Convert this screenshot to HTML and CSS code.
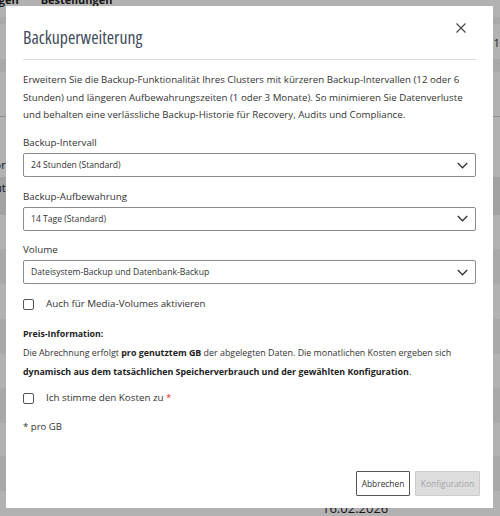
FILE: index.html
```
<!DOCTYPE html>
<html lang="de">
<head>
<meta charset="utf-8">
<title>Backuperweiterung</title>
<link rel="stylesheet" href="styles.css">
</head>
<body>

<!-- page behind the dialog -->
<div class="page">
  <div class="tabs"><span class="tab tab-cut">Anfragen</span><span class="tab">Bestellungen</span></div>
  <div class="band band-dark h7"></div>
  <div class="band h35"><span class="cell-right">13</span></div>
  <div class="band band-dark h13"></div>
  <div class="band h44 line-bottom"></div>
  <div class="band h60"><span class="cell-left">Vor</span></div>
  <div class="band band-darker h38"><span class="cell-left">Aut</span></div>
  <div class="band h34"></div>
  <div class="band band-dark h35"></div>
  <div class="band h35"></div>
  <div class="band band-dark h35"></div>
  <div class="band h34"></div>
  <div class="band band-dark h35"></div>
  <div class="band h33"></div>
  <div class="band band-dark h35"></div>
  <div class="band h30"><span class="date">16.02.2026</span></div>
</div>

<div class="overlay">
  <div class="modal">
    <div class="modal-head">
      <h2 class="modal-title">Backuperweiterung</h2>
      <button class="close" type="button" aria-label="Schließen">
        <svg width="10" height="10" viewBox="0 0 10 10"><path d="M0.5 0.5L9.5 9.5M9.5 0.5L0.5 9.5" stroke="#444" stroke-width="1.1" fill="none"/></svg>
      </button>
    </div>
    <hr class="rule">

    <p class="intro">Erweitern Sie die Backup-Funktionalität Ihres Clusters mit kürzeren Backup-Intervallen (12 oder 6 Stunden) und längeren Aufbewahrungszeiten (1 oder 3 Monate). So minimieren Sie Datenverluste und behalten eine verlässliche Backup-Historie für Recovery, Audits und Compliance.</p>

    <div class="field">
      <label class="field-label">Backup-Intervall</label>
      <div class="select"><span>24 Stunden (Standard)</span>
        <svg width="11" height="7" viewBox="0 0 11 7"><path d="M0.8 1L5.5 5.8L10.2 1" stroke="#333" stroke-width="1.3" fill="none"/></svg></div>
    </div>

    <div class="field">
      <label class="field-label">Backup-Aufbewahrung</label>
      <div class="select"><span>14 Tage (Standard)</span>
        <svg width="11" height="7" viewBox="0 0 11 7"><path d="M0.8 1L5.5 5.8L10.2 1" stroke="#333" stroke-width="1.3" fill="none"/></svg></div>
    </div>

    <div class="field">
      <label class="field-label">Volume</label>
      <div class="select"><span>Dateisystem-Backup und Datenbank-Backup</span>
        <svg width="11" height="7" viewBox="0 0 11 7"><path d="M0.8 1L5.5 5.8L10.2 1" stroke="#333" stroke-width="1.3" fill="none"/></svg></div>
    </div>

    <label class="check"><span class="box"></span>Auch für Media-Volumes aktivieren</label>

    <div class="price">
      <div class="price-title">Preis-Information:</div>
      <p class="price-text">Die Abrechnung erfolgt <b>pro genutztem GB</b> der abgelegten Daten. Die monatlichen Kosten ergeben sich <b>dynamisch aus dem tatsächlichen Speicherverbrauch und der gewählten Konfiguration</b>.</p>
    </div>

    <label class="check check-terms"><span class="box"></span>Ich stimme den Kosten zu&nbsp;<span class="req">*</span></label>

    <div class="note">* pro GB</div>

    <div class="modal-foot">
      <button class="btn btn-cancel" type="button">Abbrechen</button>
      <button class="btn btn-disabled" type="button" disabled>Konfiguration</button>
    </div>
  </div>
</div>

</body>
</html>
```

FILE: styles.css
```
html, body { margin: 0; padding: 0; }
body {
  width: 500px;
  height: 516px;
  overflow: hidden;
  font-family: "Open Sans", "DejaVu Sans", sans-serif;
  color: #333;
  background: #fff;
}

/* background page */
.page { width: 500px; }
.tabs {
  height: 17px;
  display: flex;
  gap: 22px;
  font-size: 11px;
  font-weight: bold;
  color: #222;
  line-height: 0;
  overflow: hidden;
}
.tab-cut { margin-left: -32px; }
.band { position: relative; background: #fff; }
.band-dark { background: #f2f2f2; }
.band-darker { background: #e8e8e8; }
.line-bottom { border-bottom: 1px solid #ccc; }
.h7 { height: 7px; }
.h13 { height: 13px; }
.h30 { height: 30px; }
.h33 { height: 33px; }
.h34 { height: 34px; }
.h35 { height: 35px; }
.h38 { height: 38px; }
.h44 { height: 44px; }
.h60 { height: 60px; }
.cell-right { position: absolute; right: -6px; top: 11px; font-size: 11px; color: #222; }
.cell-left { position: absolute; left: -12px; font-size: 11px; color: #222; }
.h60 .cell-left { top: 40px; }
.h38 .cell-left { top: 3px; }
.date { position: absolute; left: 322px; top: 8px; font-size: 13px; color: #222; }

/* dialog */
.overlay {
  position: fixed;
  inset: 0;
  background: rgba(0, 0, 0, 0.3);
  padding: 6px 7px 8px 6px;
  display: flex;
}
.modal {
  flex: 1;
  background: #fff;
  display: flex;
  flex-direction: column;
  padding: 18.5px 17px 12px 17px;
}
.modal-head {
  display: flex;
  justify-content: space-between;
  align-items: flex-start;
}
.modal-title {
  margin: 0;
  font-size: 17.8px;
  font-stretch: condensed;
  line-height: 24px;
  font-weight: normal;
  color: #3f4b5b;
}
.close {
  border: none;
  background: none;
  padding: 0;
  margin: -1.5px 10px 0 0;
  width: 10px;
  height: 10px;
  display: flex;
}
.rule {
  border: none;
  height: 1px;
  background: #dcdcdc;
  margin: 10.5px 0 0 0;
}
.intro {
  margin: 11px 0 0 0;
  font-size: 9.7px;
  line-height: 17.5px;
  color: #333;
}
.field { margin-top: 10.5px; }
.field-label {
  display: block;
  font-size: 9.8px;
  line-height: 18px;
  color: #333;
  margin-bottom: 1px;
}
.select {
  height: 24px;
  box-sizing: border-box;
  border: 1px solid #8c8c8c;
  border-radius: 2px;
  display: flex;
  align-items: center;
  justify-content: space-between;
  padding: 0 7px 0 7px;
  font-size: 8.6px;
  color: #333;
}
.check {
  display: flex;
  align-items: center;
  margin-top: 11px;
  font-size: 9.8px;
  line-height: 18px;
  color: #333;
}
.box {
  width: 9px;
  height: 9px;
  border: 1px solid #555;
  border-radius: 2px;
  flex: none;
  margin-right: 12px;
}
.price { margin-top: 12px; }
.price-title {
  font-size: 8.8px;
  font-weight: bold;
  line-height: 18px;
  color: #222;
}
.price-text {
  margin: 0;
  font-size: 8.9px;
  line-height: 19px;
  color: #333;
}
.price-text b { color: #222; }
.check-terms { margin-top: 8px; }
.req { color: #d33; }
.note {
  margin-top: 11px;
  font-size: 9.6px;
  line-height: 18px;
}
.modal-foot {
  margin-top: auto;
  margin-right: -4px;
  display: flex;
  justify-content: flex-end;
  gap: 5px;
}
.btn {
  height: 25px;
  box-sizing: border-box;
  border: 1px solid #555;
  border-radius: 1px;
  background: #fff;
  font-family: "Open Sans", "DejaVu Sans", sans-serif;
  font-size: 8.4px;
  color: #333;
  padding: 0;
}
.btn-cancel { width: 54px; }
.btn-disabled {
  width: 65px;
  background: #ddd;
  border-color: #ccc;
  color: #a5a5a5;
}
```
